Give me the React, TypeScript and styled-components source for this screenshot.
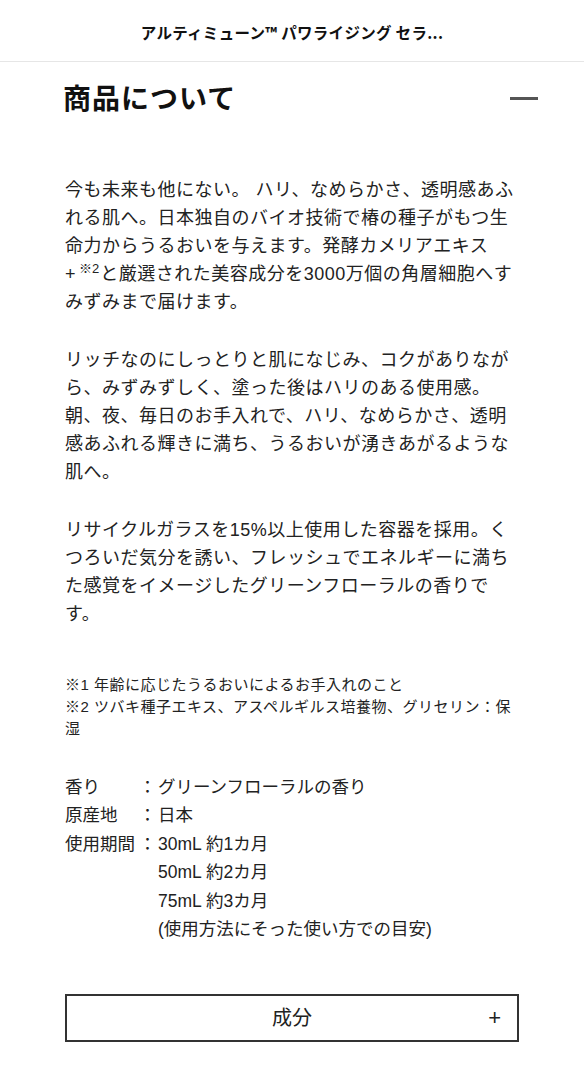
import styled, { createGlobalStyle } from 'styled-components';

const GlobalStyle = createGlobalStyle`
  html, body {
    margin: 0;
    padding: 0;
    background: #fff;
  }
  body {
    font-family: "Liberation Sans", "Noto Sans CJK JP", "Noto Sans", sans-serif;
    color: #222;
    -webkit-font-smoothing: antialiased;
  }
`;

const Header = styled.header`
  height: 61px;
  display: flex;
  align-items: center;
  justify-content: center;
  border-bottom: 1px solid #e6e6e6;
`;

const HeaderTitle = styled.h1`
  margin: 0;
  padding-top: 2px;
  font-family: "Noto Sans CJK JP", sans-serif;
  font-size: 15.5px;
  font-weight: 700;
  letter-spacing: 0.3px;
  color: #111;
`;

const Section = styled.section`
  padding: 0 65px 40px;
`;

const HeadingRow = styled.div`
  display: flex;
  align-items: center;
  justify-content: space-between;
  height: 40px;
  margin: 15px -19px 59px -2px;
`;

const Heading = styled.h2`
  margin: 0;
  font-family: "Noto Sans CJK JP", sans-serif;
  font-size: 28px;
  font-weight: 700;
  color: #111;
  letter-spacing: 1px;
`;

const Dash = styled.span`
  display: block;
  width: 28px;
  height: 3px;
  background: #555;
  margin-top: 2px;
`;

const Paragraph = styled.p`
  margin: 0 0 30px;
  font-size: 18px;
  line-height: 28px;
  letter-spacing: 0.5px;
  color: #222;
`;

// superscript note marker after the "+"
const Sup = styled.span`
  display: inline-block;
  font-size: 13px;
  line-height: 13px;
  vertical-align: 7px;
  letter-spacing: 0;
  margin: 0 1px 0 3px;
`;

const Notes = styled.div`
  margin-top: 46px;
  font-size: 15px;
  line-height: 22px;
  letter-spacing: 0.5px;
  color: #222;
`;

const SpecList = styled.dl`
  display: grid;
  grid-template-columns: 72px 21px 1fr;
  margin: 33px 0 0;
  font-size: 17.5px;
  line-height: 28.4px;
  color: #222;
`;

const SpecLabel = styled.dt`
  margin: 0;
  grid-column: 1;
`;

const SpecColon = styled.span`
  grid-column: 2;
  text-align: center;
`;

const SpecValue = styled.dd`
  margin: 0;
  grid-column: 3;
`;

const AccordionButton = styled.button`
  position: relative;
  display: flex;
  align-items: center;
  justify-content: center;
  width: 100%;
  height: 48px;
  margin-top: 51px;
  padding: 0 0 4px;
  border: 2px solid #333;
  background: #fff;
  font-family: "Noto Sans CJK JP", sans-serif;
  font-size: 20px;
  color: #222;
  cursor: pointer;
`;

const PlusIcon = styled.span`
  position: absolute;
  right: 16px;
  top: 50%;
  transform: translateY(-50%);
  font-family: "Liberation Sans", sans-serif;
  font-size: 22px;
  font-weight: 400;
  line-height: 1;
`;

const specs: { label: string; values: string[] }[] = [
  { label: '香り', values: ['グリーンフローラルの香り'] },
  { label: '原産地', values: ['日本'] },
  {
    label: '使用期間',
    values: ['30mL 約1カ月', '50mL 約2カ月', '75mL 約3カ月', '(使用方法にそった使い方での目安)'],
  },
];

const App = (): JSX.Element => (
  <>
    <GlobalStyle />
    <Header>
      <HeaderTitle>アルティミューン™ パワライジング セラ...</HeaderTitle>
    </Header>
    <Section>
      <HeadingRow>
        <Heading>商品について</Heading>
        <Dash />
      </HeadingRow>
      <Paragraph>
        今も未来も他にない。 ハリ、なめらかさ、透明感あふれる肌へ。日本独自のバイオ技術で椿の種子がもつ生命力からうるおいを与えます。発酵カメリアエキス
        <br />+<Sup>※2</Sup>と厳選された美容成分を3000万個の角層細胞へすみずみまで届けます。
      </Paragraph>
      <Paragraph>
        リッチなのにしっとりと肌になじみ、コクがありながら、みずみずしく、塗った後はハリのある使用感。
        <br />
        朝、夜、毎日のお手入れで、ハリ、なめらかさ、透明感あふれる輝きに満ち、うるおいが湧きあがるような肌へ。
      </Paragraph>
      <Paragraph>
        リサイクルガラスを15%以上使用した容器を採用。くつろいだ気分を誘い、フレッシュでエネルギーに満ちた感覚をイメージしたグリーンフローラルの香りです。
      </Paragraph>
      <Notes>
        ※1 年齢に応じたうるおいによるお手入れのこと
        <br />
        ※2 ツバキ種子エキス、アスペルギルス培養物、グリセリン：保湿
      </Notes>
      <SpecList>
        {specs.map(spec => (
          <>
            <SpecLabel key={spec.label}>{spec.label}</SpecLabel>
            <SpecColon>：</SpecColon>
            <SpecValue>
              {spec.values.map(v => (
                <div key={v}>{v}</div>
              ))}
            </SpecValue>
          </>
        ))}
      </SpecList>
      <AccordionButton type="button">
        成分
        <PlusIcon>+</PlusIcon>
      </AccordionButton>
    </Section>
  </>
);

export default App;
